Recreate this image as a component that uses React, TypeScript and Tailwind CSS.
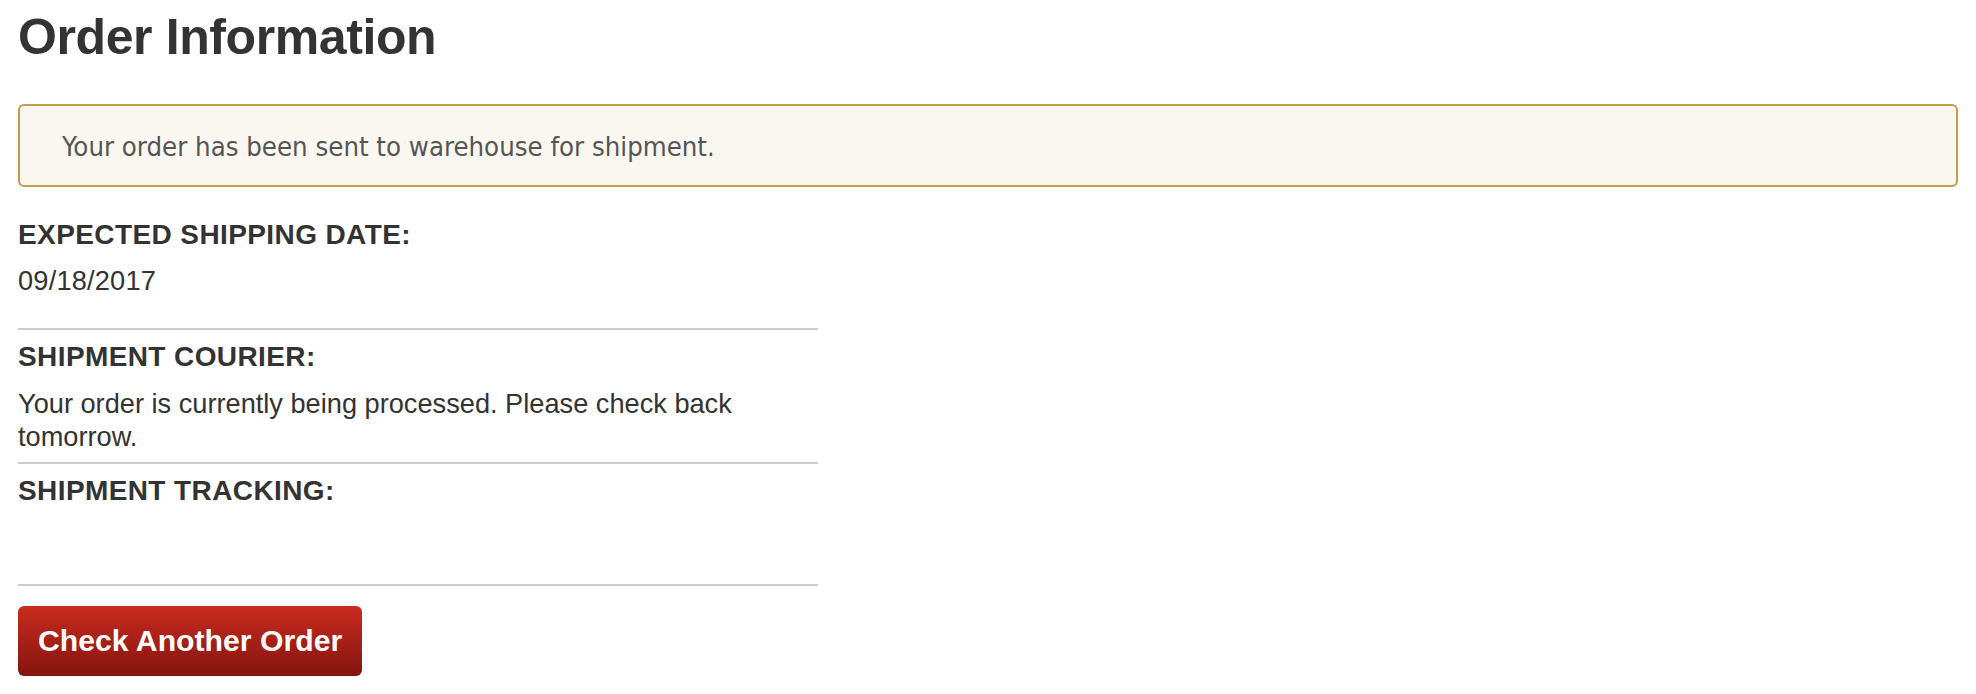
export default function App() {
  return (
    <div className="min-h-screen bg-white px-[18px] pt-[7px] font-['Liberation_Sans',Arial,sans-serif] text-[#333333]">
      <h1 className="text-[50px] leading-[60px] font-bold tracking-[-0.4px]">Order Information</h1>

      {/* status notice */}
      <div className="mt-[37px] flex h-[83px] items-center rounded-[6px] border-2 border-[#c29d4b] bg-[#faf7f1] pl-[42px] pt-[2px]">
        <p className="font-['DejaVu_Sans_Condensed','DejaVu_Sans',sans-serif] font-stretch-condensed text-[27.3px] leading-[32px] text-[#555555]">
          Your order has been sent to warehouse for shipment.
        </p>
      </div>

      <div className="w-[800px]">
        <div className="mt-[31px] border-b-2 border-[#cccccc] pb-[31px]">
          <h3 className="text-[28px] leading-[34px] font-bold uppercase tracking-[0.4px]">Expected Shipping Date:</h3>
          <p className="mt-[12px] text-[27.2px] leading-[33px] tracking-[0.2px]">09/18/2017</p>
        </div>

        <div className="border-b-2 border-[#cccccc] pt-[10px] pb-[9px]">
          <h3 className="text-[28px] leading-[34px] font-bold uppercase tracking-[0.4px]">Shipment Courier:</h3>
          <p className="mt-[13px] text-[27.2px] leading-[33px]">
            Your order is currently being processed. Please check back tomorrow.
          </p>
        </div>

        <div className="border-b-2 border-[#cccccc] pt-[10px] pb-[76px]">
          <h3 className="text-[28px] leading-[34px] font-bold uppercase tracking-[0.4px]">Shipment Tracking:</h3>
        </div>
      </div>

      <button
        type="button"
        className="mt-[20px] h-[70px] rounded-[6px] bg-linear-to-b from-[#ca2b1f] to-[#84150f] px-[20px] text-[30.2px] font-bold text-white"
      >
        Check Another Order
      </button>
    </div>
  );
}
